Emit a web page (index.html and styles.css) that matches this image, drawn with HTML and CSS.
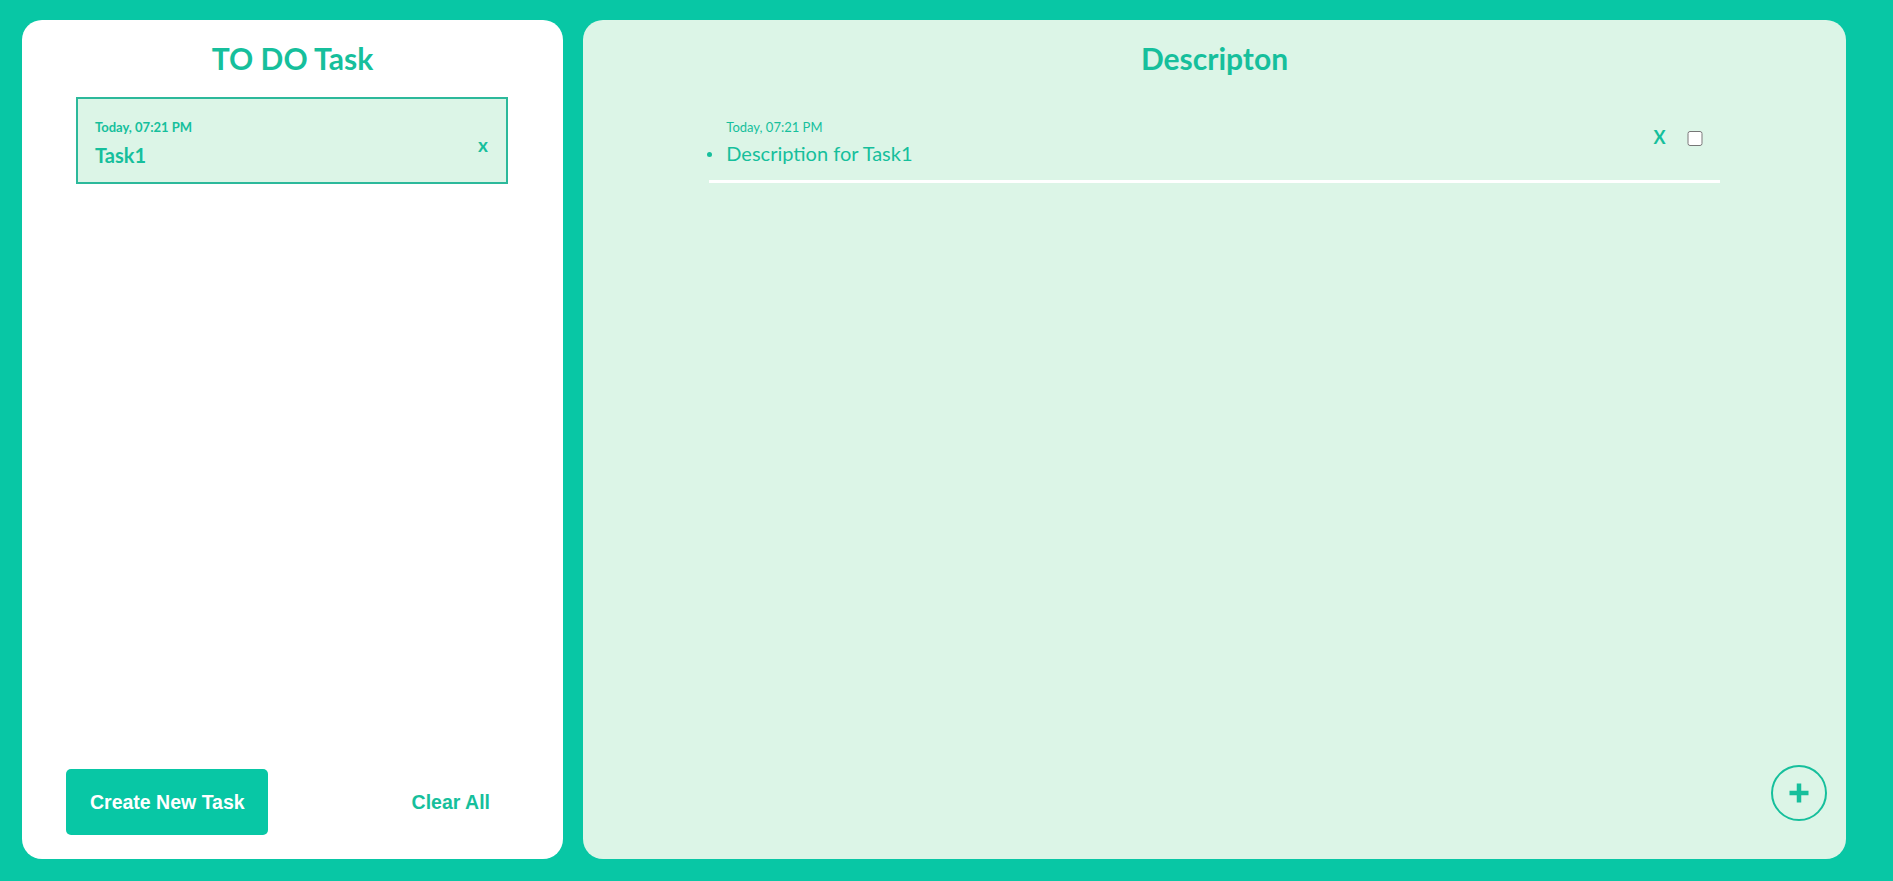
FILE: index.html
```html
<!DOCTYPE html>
<html lang="en">
<head>
<meta charset="utf-8">
<title>TO DO</title>
<link rel="stylesheet" href="styles.css">
</head>
<body>
<div class="app">
  <section class="panel tasks">
    <h2 class="panel-title">TO DO Task</h2>
    <div class="task-list">
      <div class="task-card">
        <div class="task-info">
          <div class="task-time">Today, 07:21 PM</div>
          <div class="task-name">Task1</div>
        </div>
        <button class="task-remove">x</button>
      </div>
    </div>
    <div class="task-actions">
      <button class="btn-create">Create New Task</button>
      <button class="btn-clear">Clear All</button>
    </div>
  </section>
  <section class="panel details">
    <h2 class="panel-title">Descripton</h2>
    <div class="desc-list">
      <div class="desc-item">
        <div class="desc-body">
          <div class="desc-time">Today, 07:21 PM</div>
          <ul class="desc-ul">
            <li class="desc-li">Description for Task1</li>
          </ul>
        </div>
        <div class="desc-actions">
          <button class="desc-remove">X</button>
          <input class="desc-check" type="checkbox">
        </div>
      </div>
    </div>
    <div class="details-footer">
      <button class="btn-add" aria-label="Add">
        <svg width="20" height="20" viewBox="0 0 20 20"><path d="M10 0.5V19.5M0.5 10H19.5" stroke="currentColor" stroke-width="4.5" fill="none"/></svg>
      </button>
    </div>
  </section>
</div>
</body>
</html>
```

FILE: styles.css
```css
* { box-sizing: border-box; }

html, body {
  margin: 0;
  height: 100%;
}

body {
  background: #08c7a5;
  font-family: "Lato", "Noto Sans", sans-serif;
  color: #16bf9c;
}

.app {
  display: flex;
  gap: 20px;
  height: 100vh;
  padding: 20px 47px 22px 22px;
}

.panel {
  display: flex;
  flex-direction: column;
  border-radius: 20px;
}

.tasks {
  width: 541px;
  background: #ffffff;
}

.details {
  flex: 1;
  background: #dcf5e7;
}

.panel-title {
  margin: 0;
  padding-top: 20px;
  font-size: 30px;
  line-height: 36px;
  font-weight: 700;
  text-align: center;
  color: #16bf9c;
}

.task-list {
  flex: 1;
  padding: 21px 55px 0 54px;
}

.task-card {
  display: flex;
  align-items: center;
  justify-content: space-between;
  background: #dcf5e7;
  border: 2px solid #2cb99b;
  padding: 20px 18px 15px 17px;
}

.task-time {
  font-size: 13px;
  line-height: 16px;
  font-weight: 700;
}

.task-name {
  margin-top: 8px;
  font-size: 20px;
  line-height: 24px;
  font-weight: 700;
}

.task-remove {
  border: 0;
  background: none;
  padding: 0;
  font-family: inherit;
  font-size: 19px;
  font-weight: 700;
  color: #16bf9c;
  line-height: 20px;
  margin-top: 4px;
}

.task-actions {
  display: flex;
  justify-content: space-between;
  align-items: center;
  padding: 0 50px 24px 44px;
}

.btn-create,
.btn-clear {
  height: 66px;
  padding: 0 23px 0 24px;
  border: 0;
  border-radius: 5px;
  font-family: "Liberation Sans", Arial, sans-serif;
  font-size: 19.5px;
  font-weight: 700;
}

.btn-create {
  background: #08c7a5;
  color: #ffffff;
}

.btn-clear {
  background: transparent;
  color: #16bf9c;
}

.desc-list {
  flex: 1;
  padding-top: 43px;
}

.desc-item {
  width: 80%;
  margin: 0 auto;
  display: flex;
  justify-content: space-between;
  border-bottom: 3px solid #ffffff;
  padding-bottom: 15px;
}

.desc-time {
  margin-left: 17px;
  font-size: 13px;
  line-height: 16px;
  font-weight: 400;
}

.desc-ul {
  list-style: none;
  margin: 6px 0 0;
  padding: 0;
}

.desc-li {
  display: flex;
  align-items: center;
  font-size: 20px;
  line-height: 24px;
}

.desc-li::before {
  content: "";
  width: 5px;
  height: 5px;
  border-radius: 50%;
  background: #16bf9c;
  margin: 2px 14px 0 -2px;
}

.desc-actions {
  display: flex;
  align-items: center;
  gap: 21px;
  align-self: flex-start;
  margin-top: 8px;
  margin-right: 17px;
}

.desc-remove {
  border: 0;
  background: none;
  padding: 0;
  font-family: inherit;
  font-size: 18px;
  line-height: 20px;
  font-weight: 700;
  color: #16bf9c;
}

.desc-check {
  width: 16px;
  height: 15px;
  margin: 2px 0 0;
}

.details-footer {
  display: flex;
  justify-content: flex-end;
  padding: 0 19px 38px 0;
}

.btn-add {
  width: 56px;
  height: 56px;
  border-radius: 50%;
  border: 2px solid #16bf9c;
  background: transparent;
  color: #16bf9c;
  display: flex;
  align-items: center;
  justify-content: center;
  padding: 0;
}

.btn-add svg {
  display: block;
}
```
